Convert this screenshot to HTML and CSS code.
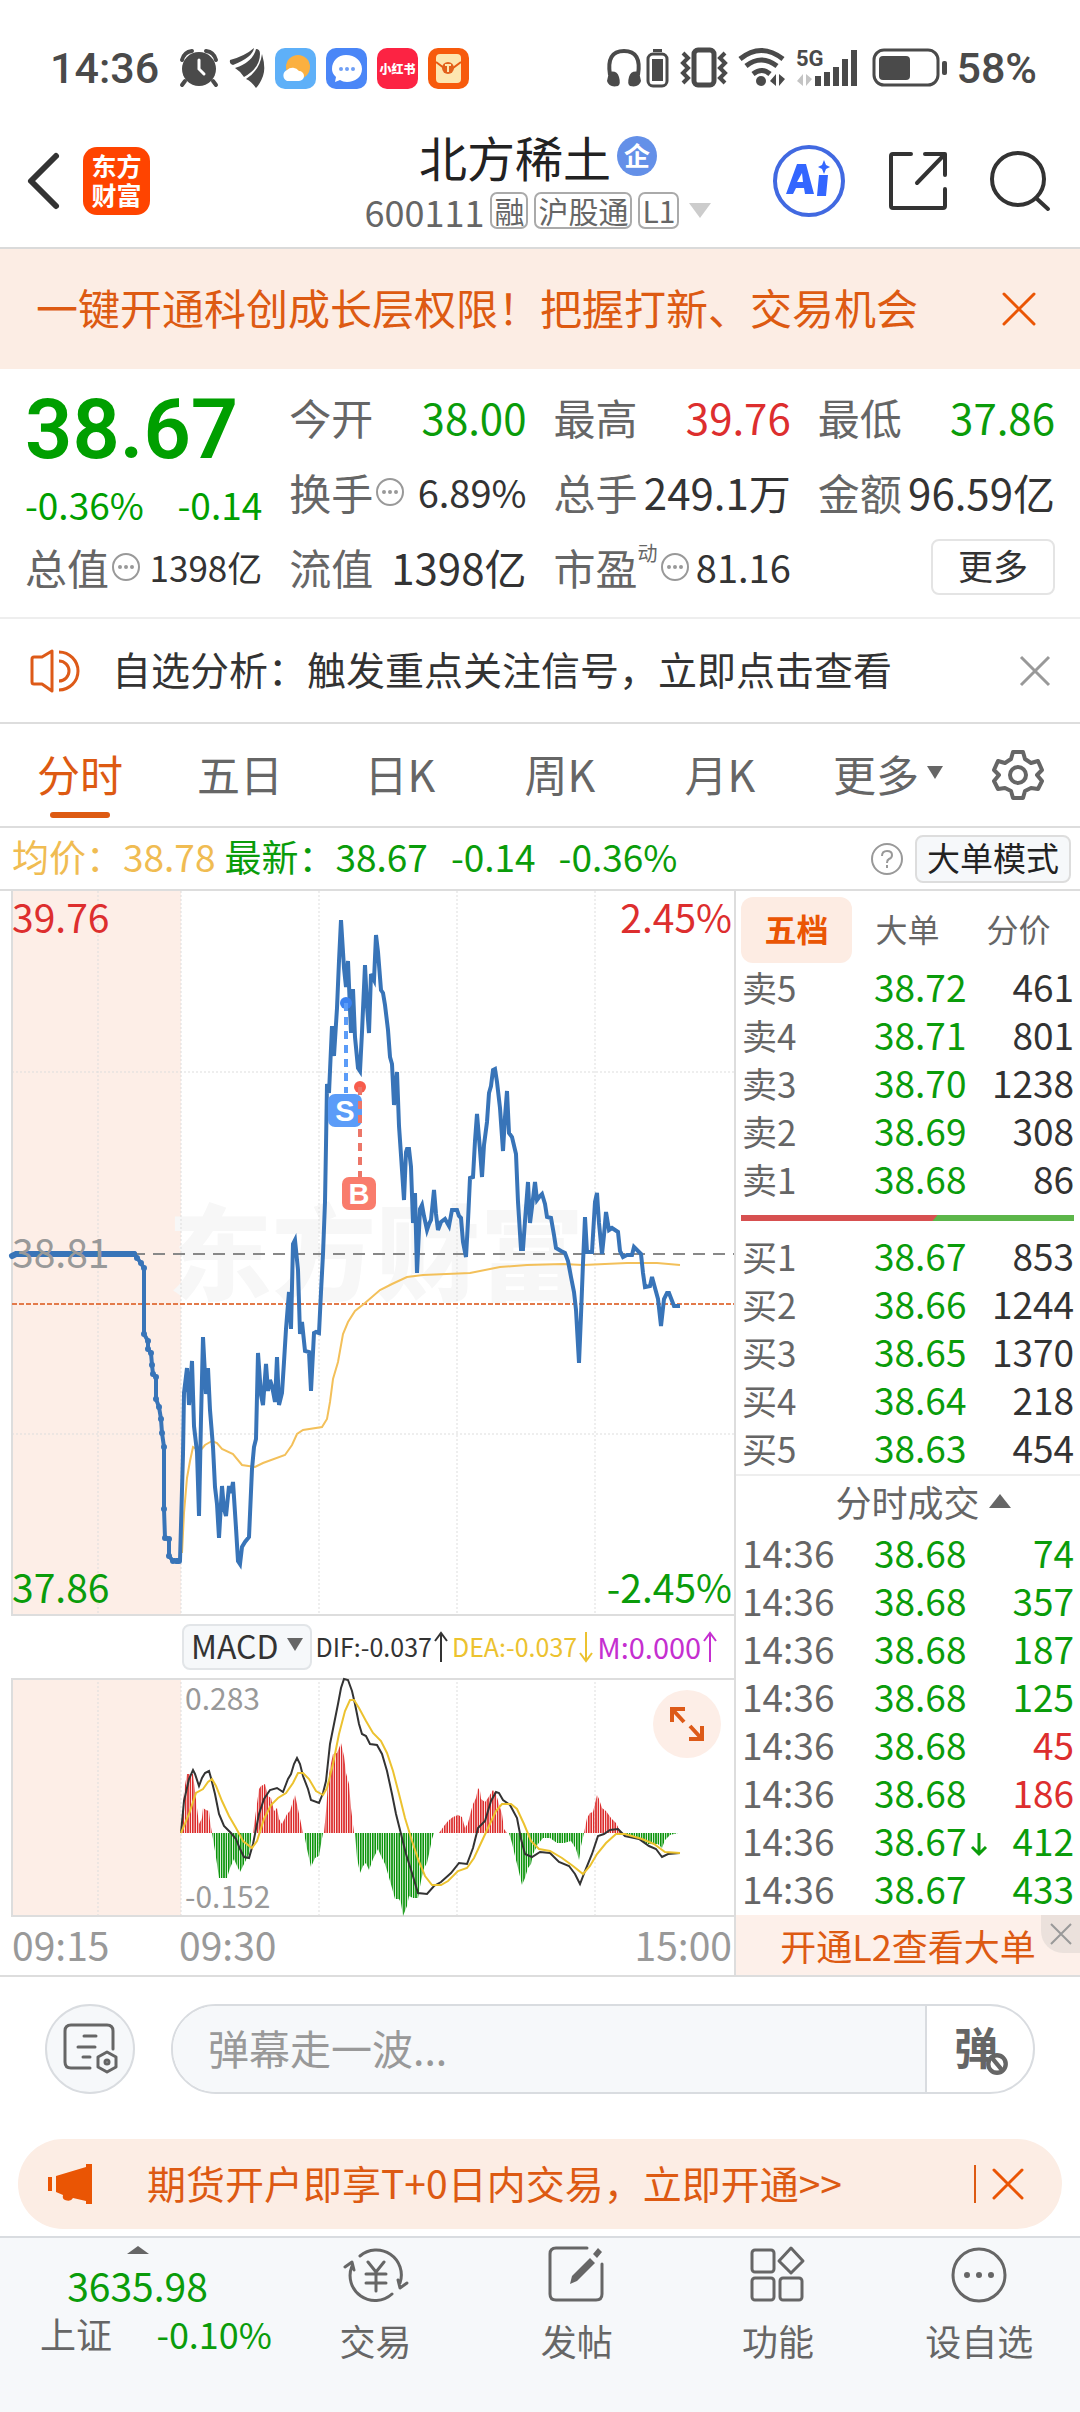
FILE: index.html
```html
<!DOCTYPE html>
<html lang="zh-CN">
<head>
    <meta charset="UTF-8">
    <meta name="viewport" content="width=device-width, initial-scale=1.0">
    <title>北方稀土 600111</title>
    <link rel="stylesheet" href="styles.css">
</head>
<body>

    <!-- Status bar -->
    <div class="status">
        <div class="status-group">
            <span class="clock">14:36</span>
            <svg width="40" height="40" viewBox="0 0 40 40" fill="#4a4a4a">
                <circle cx="20" cy="21" r="17"/>
                <path d="M6 33l-3 4M34 33l3 4M3 12q2-8 10-9M37 12q-2-8-10-9" stroke="#4a4a4a" stroke-width="4" fill="none" stroke-linecap="round"/>
                <path d="M20 12v9l5 5" stroke="#fff" stroke-width="3" fill="none" stroke-linecap="round"/>
            </svg>
            <svg width="36" height="40" viewBox="0 0 36 40" fill="#4a4a4a">
                <path d="M1 12Q16 8 25 0Q24 9 4 17Q0 16 1 12z"/>
                <path d="M6 20Q24 14 27 1Q31 1 31 6Q31 20 15 29Q11 23 6 20z"/>
                <path d="M17 31Q31 22 33 6Q37 20 34 28Q31 36 27 40Q22 33 17 31z"/>
            </svg>
            <svg class="app" viewBox="0 0 41 41">
                <rect width="41" height="41" rx="10" fill="#5eb0f8"/>
                <circle cx="23" cy="19" r="12" fill="#fbb040"/>
                <path d="M12 33a6 6 0 0 1 0-11a8 8 0 0 1 12 1a5 5 0 0 1 0 10z" fill="#fff"/>
            </svg>
            <svg class="app" viewBox="0 0 41 41">
                <rect width="41" height="41" rx="10" fill="#4a86f7"/>
                <path d="M20 7c9 0 16 6 16 14s-7 13-15 13c-3 0-5-1-7-2l-5 2 1-5c-3-3-4-5-4-8 0-8 6-14 14-14z" fill="#fff"/>
                <g fill="#6f9ff5"><circle cx="15" cy="21" r="2"/><circle cx="21" cy="21" r="2"/><circle cx="27" cy="21" r="2"/></g>
            </svg>
            <span class="app app-red">小红书</span>
            <svg class="app" viewBox="0 0 41 41">
                <rect width="41" height="41" rx="10" fill="#f75a0c"/>
                <rect x="8" y="6" width="25" height="29" rx="4" fill="#fde6b0"/>
                <path d="M8 14l8 6h9l8-6" stroke="#e65a12" stroke-width="2" fill="none"/>
                <circle cx="20" cy="20" r="6" fill="#e2601c"/>
                <path d="M17 17h6M20 17v7" stroke="#fde6b0" stroke-width="2"/>
            </svg>
        </div>
        <div class="status-group status-right">
            <svg width="67" height="40" viewBox="0 0 67 40">
                <path d="M4 27Q0 3 18 3T32 27" fill="none" stroke="#4a4a4a" stroke-width="4"/>
                <path d="M3 24q8-2 10 5t-1 9q-9 2-11-5zM33 24q-8-2-10 5t1 9q9 2 11-5z" fill="#4a4a4a"/>
                <rect x="42" y="6" width="19" height="32" rx="5" fill="none" stroke="#4a4a4a" stroke-width="3"/>
                <path d="M46 11h11v22H46zM47 1h9v3h-9z" fill="#4a4a4a"/>
            </svg>
            <svg width="49" height="40" viewBox="0 0 49 40" fill="none" stroke="#4a4a4a">
                <rect x="13" y="2" width="20" height="35" rx="4" stroke-width="5"/>
                <path d="M2 5l5 5-5 5 5 5-5 5 5 5-5 5M44 5l-5 5 5 5-5 5 5 5-5 5 5 5" stroke-width="4"/>
            </svg>
            <svg width="50" height="40" viewBox="0 0 50 40">
                <g fill="none" stroke="#4a4a4a" stroke-width="5">
                    <path d="M2 11q21-17 43 0M8 18q15-12 31 0M15 26q9-7 17 0"/>
                </g>
                <circle cx="23" cy="33" r="5" fill="#4a4a4a"/>
                <path d="M32 33l6-7v12M41 26v12l6-7" fill="#4a4a4a"/>
            </svg>
            <svg width="68" height="40" viewBox="0 0 68 40">
                <text class="net-label" x="0" y="18">5G</text>
                <path d="M1 33l6-7v12M10 26v12l6-7" fill="#c4c4c4"/>
                <path d="M22 28v10M31 24v14M40 19v19M49 11v27M58 2v36" stroke="#4a4a4a" stroke-width="6"/>
            </svg>
            <svg width="76" height="40" viewBox="0 0 76 40">
                <rect x="2" y="2" width="64" height="35" rx="10" fill="none" stroke="#4a4a4a" stroke-width="3"/>
                <rect x="7" y="8" width="31" height="24" rx="4" fill="#4a4a4a"/>
                <rect x="70" y="13" width="5" height="14" rx="2" fill="#4a4a4a"/>
            </svg>
            <span class="battery">58%</span>
        </div>
    </div>

    <!-- Title bar -->
    <header class="header">
        <div class="header-left">
            <button class="icon-btn" aria-label="返回">
                <svg width="34" height="58" viewBox="0 0 34 58" fill="none" stroke="#333" stroke-width="6" stroke-linecap="round" stroke-linejoin="round"><path d="M30 4L5 29l25 25"/></svg>
            </button>
            <a class="logo" href="#">东方<br>财富</a>
        </div>
        <div class="header-title">
            <h1 class="stock-name">北方稀土<span class="badge">企</span></h1>
            <div class="stock-code">
                <span>600111</span>
                <span class="tag">融</span>
                <span class="tag">沪股通</span>
                <span class="tag">L1</span>
                <svg width="22" height="16" viewBox="0 0 22 16"><path d="M0 0h22L11 15z" fill="#ccc"/></svg>
            </div>
        </div>
        <div class="header-right">
            <button class="icon-btn" aria-label="AI">
                <svg width="74" height="74" viewBox="0 0 74 74">
                    <circle cx="37" cy="37" r="34" fill="none" stroke="#4169e1" stroke-width="4"/>
                    <path d="M14 50L25 20h9l8 30h-9l-1-6h-8l-3 6zM25 38h6l-1-9z" fill="#3366ff" fill-rule="evenodd"/>
                    <path d="M47 31h9l-2 21h-9zM52 16l2 5 4 2-4 2-2 5-2-5-4-2 4-2z" fill="#3366ff"/>
                </svg>
            </button>
            <button class="icon-btn" aria-label="分享">
                <svg width="60" height="60" viewBox="0 0 60 60" fill="none" stroke="#333" stroke-width="4" stroke-linecap="round" stroke-linejoin="round"><path d="M23 3H5q-2 0-2 2v50q0 2 2 2h50q2 0 2-2V38M37 3h20v21M56 4L29 32"/></svg>
            </button>
            <button class="icon-btn" aria-label="搜索">
                <svg width="60" height="62" viewBox="0 0 60 62" fill="none" stroke="#333" stroke-width="4" stroke-linecap="round"><circle cx="28" cy="29" r="26"/><path d="M46 48l12 11"/></svg>
            </button>
        </div>
    </header>

    <!-- Promo strip -->
    <div class="promo">
        <a href="#">一键开通科创成长层权限！把握打新、交易机会</a>
        <button class="icon-btn" aria-label="关闭">
            <svg width="34" height="34" viewBox="0 0 34 34" stroke="#ea5504" stroke-width="3" stroke-linecap="round"><path d="M2 2l30 30M32 2L2 32"/></svg>
        </button>
    </div>

    <!-- Quote summary -->
    <section class="quote">
        <div class="quote-main">
            <div class="price">38.67</div>
            <div class="change"><span>-0.36%</span><span>-0.14</span></div>
        </div>
        <div class="stat"><span class="stat-name">今开</span><span class="down">38.00</span></div>
        <div class="stat"><span class="stat-name">最高</span><span class="up">39.76</span></div>
        <div class="stat"><span class="stat-name">最低</span><span class="down">37.86</span></div>
        <div class="stat"><span class="stat-name">换手<svg class="dots" viewBox="0 0 30 30"><use href="#i-dots"/></svg></span><span class="mid">6.89%</span></div>
        <div class="stat"><span class="stat-name">总手</span><span>249.1万</span></div>
        <div class="stat"><span class="stat-name">金额</span><span>96.59亿</span></div>
        <div class="stat"><span class="stat-name">总值<svg class="dots" viewBox="0 0 30 30"><use href="#i-dots"/></svg></span><span class="small">1398亿</span></div>
        <div class="stat"><span class="stat-name">流值</span><span>1398亿</span></div>
        <div class="stat"><span class="stat-name">市盈<sup>动</sup><svg class="dots" viewBox="0 0 30 30"><use href="#i-dots"/></svg></span><span class="mid">81.16</span></div>
        <div class="stat"><button class="more-btn">更多</button></div>
    </section>

    <!-- Notice -->
    <div class="notice">
        <svg width="52" height="44" viewBox="0 0 52 44" fill="none" stroke="#dd5a18" stroke-width="3" stroke-linejoin="round"><path d="M3 10q0-2 2-2h8L23 2v40l-10-7H5q-2 0-2-2zM30 3a19 19 0 0 1 0 38M30 12a10 10 0 0 1 0 20"/></svg>
        <a href="#">自选分析：触发重点关注信号，立即点击查看</a>
        <button class="icon-btn" aria-label="关闭">
            <svg width="30" height="30" viewBox="0 0 30 30" stroke="#999" stroke-width="3"><path d="M1 1l28 28M29 1L1 29"/></svg>
        </button>
    </div>

    <!-- Period tabs -->
    <nav class="tabs">
        <button class="tab active">分时</button>
        <button class="tab">五日</button>
        <button class="tab">日K</button>
        <button class="tab">周K</button>
        <button class="tab">月K</button>
        <button class="tab tab-more">更多<svg width="16" height="14" viewBox="0 0 16 14"><path d="M0 0h16L8 13z" fill="#666"/></svg></button>
        <button class="tab tab-gear" aria-label="设置">
            <svg width="52" height="52" viewBox="0 0 52 52" fill="none" stroke="#666" stroke-width="4" stroke-linejoin="round">
                <path d="M21 3h10l2 7 6 4 7-2 4 9-5 5 5 6-4 8-7-1-6 3-2 7H21l-2-7-6-3-7 1-4-8 5-6-5-5 4-9 7 2 6-4z"/>
                <circle cx="26" cy="26" r="8"/>
            </svg>
        </button>
    </nav>

    <div class="info">
        <span class="avg">均价：38.78</span>
        <span class="down info-last"><span>最新：38.67</span><span>-0.14</span><span>-0.36%</span></span>
        <span class="info-right">
            <svg width="34" height="34" viewBox="0 0 34 34"><circle cx="17" cy="17" r="15" fill="none" stroke="#999" stroke-width="2"/><path d="M12 14q0-5 5-5t5 4q0 3-3 4-2 1-2 4M17 23v3" fill="none" stroke="#999" stroke-width="2"/></svg>
            <button class="mode-btn">大单模式</button>
        </span>
    </div>

    <main class="board">
        <div class="charts">
            <!-- Intraday price -->
            <svg class="chart" viewBox="0 0 734 724">
                <rect x="12" y="0" width="169" height="724" fill="#fdeee7"/>
                <text class="watermark" x="168" y="402">东方财富</text>
                <path class="grid" d="M98 0v724M181 0v724M319 0v724M457 0v724M595 0v724M12 181h722M12 543h722"/>
                <path class="frame" d="M12 0v724h722"/>
                <path d="M133 363h601" stroke="#888" stroke-width="2" stroke-dasharray="12 8"/>
                <path d="M12 413h722" stroke="#e37a4a" stroke-width="2" stroke-dasharray="5 2"/>
                <polyline class="line-avg" points="182,662 184,622 187,587 190,570 193,556 200,560 205,554 212,550 217,552 222,558 233,563 242,574 255,576 263,572 285,564 292,554 297,543 303,539 322,536 327,528 330,511 333,488 338,471 343,443 348,431 355,420 365,412 380,399 392,393 407,386 423,384 470,382 490,378 500,376 527,374 563,373 583,374 627,372 657,372 680,374"/>
                <path d="M12 365L16 363H134" stroke="#3874b8" stroke-width="6" fill="none" stroke-linecap="round"/>
                <polyline class="line-auction" points="134,363 138,368 144,377 144,443 148,450 148,458 151,462 152,474 153,483 156,486 156,508 159,516 161,528 162,542 164,556 164,618 165,647 169,648 169,665 173,670 180,670"/>
                <path class="auction-dots" d="M134 363h0M137 367h0M141 372h0M144 377h0M144 443h0M148 450h0M148 458h0M151 462h0M152 474h0M153 483h0M156 486h0M156 508h0M159 516h0M161 528h0M162 542h0M164 556h0M164 618h0M165 647h0M169 648h0M169 665h0M173 670h0M176 670h3"/>
                <polyline class="line-price" points="180,670 183,563 184,502 187,477 189,514 192,470 194,535 197,561 199,625 201,528 203,446 206,503 208,477 210,519 213,556 215,596 217,613 219,647 222,595 224,618 226,625 229,595 231,602 233,591 236,637 238,670 240,673 242,656 245,651 249,646 252,578 254,556 256,548 258,462 261,504 263,514 266,473 268,500 270,489 272,495 275,511 277,466 279,514 282,502 284,471 286,438 289,401 291,438 293,353 295,349 298,379 300,443 302,431 305,460 309,461 311,500 314,442 316,441 319,442 321,401 323,363 325,311 326,254 327,193 329,202 332,135 334,165 337,117 339,70 341,29 344,77 346,96 348,70 351,142 353,98 355,146 358,177 360,180 362,141 365,74 367,115 369,142 371,83 374,89 376,44 378,61 381,99 383,102 385,114 388,139 390,166 392,173 394,214 397,181 399,235 401,264 404,309 406,261 407,258 409,258 411,276 413,332 415,302 417,382 420,318 422,314 424,325 427,339 429,333 431,329 434,299 436,323 438,339 441,331 445,328 449,335 452,319 457,319 459,325 461,327 463,351 466,366 468,330 470,287 473,286 475,250 477,223 480,259 482,286 484,254 487,231 489,202 491,195 493,179 495,178 497,191 500,217 503,260 505,226 507,200 509,242 512,246 516,263 518,311 521,358 523,358 525,330 528,291 530,332 532,316 535,291 537,309 540,305 542,303 545,313 547,326 551,327 554,344 556,357 561,360 565,362 568,370 571,386 574,401 576,419 579,472 581,424 583,372 585,326 587,361 592,361 595,311 597,302 599,332 602,363 604,344 606,321 609,339 612,337 618,341 620,360 623,366 627,364 632,364 634,356 641,363 643,382 645,396 650,395 652,386 655,397 658,408 661,435 664,408 667,402 669,402 674,415 680,415"/>
                <!-- Sell / buy marks -->
                <circle cx="346" cy="112" r="6" fill="#3b82f0"/>
                <path d="M346 112v90" stroke="#5b9cf8" stroke-width="4" stroke-dasharray="8 6"/>
                <rect x="328" y="203" width="34" height="33" rx="7" fill="#5b9cf8"/>
                <text class="mark" x="345" y="230">S</text>
                <circle cx="360" cy="196" r="6" fill="#f75c4c"/>
                <path d="M360 196v90" stroke="#ec7668" stroke-width="4" stroke-dasharray="8 6"/>
                <rect x="342" y="286" width="34" height="33" rx="7" fill="#f97c6c"/>
                <text class="mark" x="359" y="313">B</text>
                <text class="axis up" x="12" y="42">39.76</text>
                <text class="axis axis-mid" x="12" y="377">38.81</text>
                <text class="axis down" x="12" y="712">37.86</text>
                <text class="axis end up" x="732" y="42">2.45%</text>
                <text class="axis end down" x="732" y="712">-2.45%</text>
            </svg>

            <div class="macd-bar">
                <button class="macd-btn">MACD<svg width="16" height="14" viewBox="0 0 16 14"><path d="M0 0h16L8 13z" fill="#666"/></svg></button>
                <span class="macd-val">DIF:-0.037<svg class="arrow" viewBox="0 0 14 32"><path d="M7 31V2M1 10l6-8 6 8"/></svg></span>
                <span class="macd-val dea">DEA:-0.037<svg class="arrow" viewBox="0 0 14 32"><path d="M7 1v29M1 22l6 8 6-8"/></svg></span>
                <span class="macd-val hist">M:0.000<svg class="arrow" viewBox="0 0 14 32"><path d="M7 31V2M1 10l6-8 6 8"/></svg></span>
            </div>

            <!-- MACD -->
            <div class="macd-wrap">
                <svg class="chart" viewBox="0 0 734 239">
                    <defs>
                        <pattern id="bars-up" width="2.4" height="10" patternUnits="userSpaceOnUse"><rect width="1.6" height="10" fill="#dc2c2c"/></pattern>
                        <pattern id="bars-down" width="2.4" height="10" patternUnits="userSpaceOnUse"><rect width="1.6" height="10" fill="#0c950c"/></pattern>
                    </defs>
                    <rect x="12" y="0" width="169" height="238" fill="#fdeee7"/>
                    <path class="grid" d="M98 0v238M181 0v238M319 0v238M457 0v238M595 0v238"/>
                    <path class="frame" d="M734 1H12v237h722"/>
                    <g fill="url(#bars-up)">
                        <path d="M182 155L184 113 187 96 193 96 195 113 197 130 199 146 202 140 203 130 206 132 209 133 210 143 212 155z"/>
                        <path d="M253 155L256 133 259 111 261 108 265 106 268 118 271 120 274 133 277 130 279 141 282 146 287 136 290 133 293 123 295 117 298 131 303 155z"/>
                        <path d="M324 155L326 133 328 106 330 90 333 76 337 75 339 70 341 65 344 78 346 95 349 106 351 130 354 155z"/>
                        <path d="M439 155L444 148 448 143 453 139 458 137 462 139 465 150 468 145 471 133 473 126 476 120 478 110 480 113 481 121 485 124 488 120 493 112 496 116 499 126 502 136 504 151 507 155z"/>
                        <path d="M584 155L587 140 590 135 593 134 597 117 599 121 602 130 606 133 611 140 616 145 619 151 622 155z"/>
                    </g>
                    <g fill="url(#bars-down)">
                        <path d="M212 155L215 173 217 186 219 200 227 200 230 190 234 181 237 188 240 194 244 186 249 176 252 155z"/>
                        <path d="M304 155L307 171 309 180 311 189 315 180 319 178 321 166 323 155z"/>
                        <path d="M355 155L357 180 360 195 363 188 366 185 369 192 373 181 378 171 381 178 385 186 388 196 392 210 395 221 399 221 401 225 403 238 407 228 409 218 413 220 418 220 421 203 424 190 427 185 429 176 432 161 434 155z"/>
                        <path d="M509 155L512 165 515 178 518 190 522 207 525 200 528 190 531 186 533 176 538 166 543 160 550 160 557 165 564 165 571 163 576 171 579 182 581 168 584 155z"/>
                        <path d="M623 155L628 158 637 160 647 166 651 166 658 166 662 170 665 162 670 157 678 155z"/>
                    </g>
                    <polyline class="line-dif" points="181,155 184,123 189,101 193,92 195,96 199,108 202,100 205,95 209,93 211,100 215,116 219,136 224,148 231,155 236,161 240,171 244,179 249,180 253,166 259,136 264,121 270,112 277,110 283,114 288,101 291,96 294,86 297,80 300,86 303,98 308,111 311,122 319,125 323,115 326,103 330,66 334,46 338,26 341,10 344,1 348,2 352,13 355,26 359,46 362,56 366,58 370,66 377,67 382,76 387,93 392,116 396,136 401,156 406,176 412,195 418,215 427,216 434,208 441,204 451,195 459,185 467,186 473,170 478,150 485,143 491,123 496,114 499,115 503,122 510,127 517,140 521,161 525,176 532,179 540,174 550,175 559,184 569,188 575,196 580,206 585,193 592,176 598,158 604,156 610,152 618,151 625,158 639,161 649,168 656,171 662,179 668,176 680,175"/>
                    <polyline class="line-dea" points="181,155 189,136 196,115 203,111 208,104 212,101 216,108 222,123 229,138 236,150 243,163 252,170 257,163 264,141 271,127 278,120 286,115 293,105 298,95 303,95 309,101 316,113 323,117 327,110 333,86 339,56 345,33 350,22 354,22 359,30 366,43 373,55 381,63 387,75 393,93 399,116 405,140 412,163 418,181 425,198 432,207 441,207 448,203 458,193 467,190 474,180 481,165 488,150 496,133 502,126 511,126 517,131 524,146 531,163 539,171 550,173 562,180 573,188 583,196 590,188 597,176 606,165 616,156 625,156 642,161 654,166 665,174 680,175"/>
                    <text class="axis-small" x="185" y="32">0.283</text>
                    <text class="axis-small" x="185" y="230">-0.152</text>
                </svg>
                <button class="expand" aria-label="放大">
                    <svg width="34" height="34" viewBox="0 0 34 34" fill="none" stroke="#dd5a18" stroke-width="4"><path d="M2 15V2h13M3 3l11 12M32 19v13H19M31 31L20 19"/></svg>
                </button>
            </div>
            <div class="times"><span>09:15</span><span>09:30</span><span>15:00</span></div>
        </div>

        <!-- Order book -->
        <aside class="book">
            <div class="book-tabs">
                <button class="book-tab active">五档</button>
                <button class="book-tab">大单</button>
                <button class="book-tab">分价</button>
            </div>
            <table class="rows">
                <tr><th>卖5</th><td>38.72</td><td>461</td></tr>
                <tr><th>卖4</th><td>38.71</td><td>801</td></tr>
                <tr><th>卖3</th><td>38.70</td><td>1238</td></tr>
                <tr><th>卖2</th><td>38.69</td><td>308</td></tr>
                <tr><th>卖1</th><td>38.68</td><td>86</td></tr>
            </table>
            <div class="ratio"><i></i></div>
            <table class="rows">
                <tr><th>买1</th><td>38.67</td><td>853</td></tr>
                <tr><th>买2</th><td>38.66</td><td>1244</td></tr>
                <tr><th>买3</th><td>38.65</td><td>1370</td></tr>
                <tr><th>买4</th><td>38.64</td><td>218</td></tr>
                <tr><th>买5</th><td>38.63</td><td>454</td></tr>
            </table>
            <button class="deals-title">分时成交<svg width="22" height="14" viewBox="0 0 22 14"><path d="M0 14h22L11 0z" fill="#666"/></svg></button>
            <table class="rows deals">
                <tr><th>14:36</th><td>38.68</td><td class="down">74</td></tr>
                <tr><th>14:36</th><td>38.68</td><td class="down">357</td></tr>
                <tr><th>14:36</th><td>38.68</td><td class="down">187</td></tr>
                <tr><th>14:36</th><td>38.68</td><td class="down">125</td></tr>
                <tr><th>14:36</th><td>38.68</td><td class="up">45</td></tr>
                <tr><th>14:36</th><td>38.68</td><td class="up">186</td></tr>
                <tr><th>14:36</th><td>38.67<svg class="tick" viewBox="0 0 18 24"><path d="M9 1v21M2 15l7 7 7-7"/></svg></td><td class="down">412</td></tr>
                <tr><th>14:36</th><td>38.67</td><td class="down">433</td></tr>
            </table>
            <div class="level2">
                <a href="#">开通L2查看大单</a>
                <button class="level2-close" aria-label="关闭">
                    <svg width="22" height="22" viewBox="0 0 22 22" stroke="#999" stroke-width="2"><path d="M1 1l20 20M21 1L1 21"/></svg>
                </button>
            </div>
        </aside>
    </main>

    <!-- Comment box -->
    <div class="comment">
        <button class="comment-set" aria-label="弹幕设置">
            <svg width="56" height="52" viewBox="0 0 56 52" fill="none" stroke="#666" stroke-width="3" stroke-linecap="round" stroke-linejoin="round">
                <path d="M28 45H9q-6 0-6-6V8q0-6 6-6h36q6 0 6 6v18M22 13h12M16 24h17M21 34h7"/>
                <path d="M45 29l9 5v10l-9 5-9-5V34z"/><circle cx="45" cy="39" r="2"/>
            </svg>
        </button>
        <div class="comment-box">
            <input class="comment-input" type="text" placeholder="弹幕走一波..." aria-label="弹幕">
            <button class="comment-off" aria-label="关闭弹幕">弹<svg class="ban" viewBox="0 0 22 22"><circle cx="11" cy="11" r="8"/><path d="M6 5l10 12"/></svg></button>
        </div>
    </div>

    <div class="futures">
        <svg width="48" height="40" viewBox="0 0 48 40" fill="#ea5504"><path d="M0 13h4v14H0zM8 12L38 3V0h6v40h-6v-3l-13-3q-2 4-8 2-3-1-2-5l-7-3z"/></svg>
        <a href="#">期货开户即享T+0日内交易，立即开通&gt;&gt;</a>
        <button class="icon-btn futures-close" aria-label="关闭">
            <svg width="32" height="32" viewBox="0 0 32 32" stroke="#ea5504" stroke-width="3" stroke-linecap="round"><path d="M2 2l28 28M30 2L2 30"/></svg>
        </button>
    </div>

    <!-- Bottom bar -->
    <footer class="bottom">
        <a class="index" href="#">
            <svg width="22" height="8" viewBox="0 0 22 8"><path d="M0 8h22L11 0z" fill="#666"/></svg>
            <span class="index-value">3635.98</span>
            <span class="index-row"><span>上证</span><span class="down">-0.10%</span></span>
        </a>
        <a class="nav-item" href="#">
            <svg viewBox="0 0 66 58"><path d="M17 10A25 25 0 0 1 57 37M49 48A25 25 0 0 1 9 20M2 21l7-5 2 8M64 37l-7 5-2-8M25 16l8 10 8-10M33 26v19M23 28h20M23 37h20"/></svg>
            交易
        </a>
        <a class="nav-item" href="#">
            <svg viewBox="0 0 66 58"><path d="M43 2H12q-6 0-6 6v40q0 6 6 6h40q6 0 6-6V18"/><path d="M26 38l2-8 18-18 5 5-18 18zM49 8l5-6 4 4-5 6z" fill="#666" stroke="none"/></svg>
            发帖
        </a>
        <a class="nav-item" href="#">
            <svg viewBox="0 0 66 58"><rect x="7" y="4" width="22" height="22" rx="3"/><rect x="7" y="32" width="22" height="22" rx="3"/><rect x="35" y="32" width="22" height="22" rx="3"/><path d="M46 2l12 13-12 12-12-12z"/></svg>
            功能
        </a>
        <a class="nav-item" href="#">
            <svg viewBox="0 0 66 58"><circle cx="33" cy="29" r="26"/><path d="M21 29h0M33 29h0M45 29h0" stroke-width="6"/></svg>
            设自选
        </a>
    </footer>

    <!-- Shared symbols -->
    <svg class="defs" width="0" height="0">
        <symbol id="i-dots" viewBox="0 0 30 30">
            <circle cx="15" cy="15" r="13" fill="none" stroke="#999" stroke-width="2"/>
            <path d="M9 15h0M15 15h0M21 15h0" stroke="#999" stroke-width="4" stroke-linecap="round"/>
        </symbol>
    </svg>

</body>
</html>
```

FILE: styles.css
```css
* {
    box-sizing: border-box;
}

body {
    margin: 0;
    min-height: 100vh;
    display: flex;
    flex-direction: column;
    background-color: #fff;
    color: #333;
    font-family: "Noto Sans CJK SC", sans-serif;
    font-size: 42px;
    line-height: 1;
}

a {
    color: inherit;
    text-decoration: none;
}

button {
    margin: 0;
    padding: 0;
    border: none;
    background: none;
    color: inherit;
    font: inherit;
    cursor: pointer;
}

svg {
    display: block;
    flex: none;
    overflow: visible;
}

.defs {
    position: absolute;
}

.icon-btn {
    display: flex;
}

.up { color: #dd2e2e; fill: #dd2e2e; }
.down { color: #0a9c0a; fill: #0a9c0a; }

/* Status bar */
.status {
    display: flex;
    justify-content: space-between;
    align-items: center;
    height: 114px;
    padding: 22px 43px 0 50px;
    color: #4a4a4a;
}
.status-group {
    display: flex;
    align-items: center;
    gap: 10px;
}
.status-group .app {
    width: 41px;
    height: 41px;
}
.clock,
.battery {
    font-family: Roboto, sans-serif;
    font-size: 43px;
    font-weight: 500;
}
.clock {
    margin-right: 10px;
}
.status-right {
    gap: 8px;
}
.app-red {
    border-radius: 10px;
    background-color: #fc2343;
    color: #fff;
    font-size: 12px;
    font-weight: 900;
    line-height: 41px;
    text-align: center;
}
.net-label {
    fill: #4a4a4a;
    font-family: Roboto, sans-serif;
    font-size: 22px;
    font-weight: 700;
}

/* Title bar */
.header {
    display: grid;
    grid-template-columns: 1fr auto 1fr;
    align-items: center;
    height: 135px;
    padding: 0 30px 0 26px;
    border-bottom: 2px solid #dadada;
}
.header-left {
    display: flex;
    align-items: center;
    gap: 23px;
}
.logo {
    width: 67px;
    height: 68px;
    padding-top: 4px;
    border-radius: 14px;
    background-color: #ff4400;
    color: #fff;
    font-size: 25px;
    font-weight: 700;
    line-height: 29px;
    text-align: center;
}
.header-title {
    display: flex;
    flex-direction: column;
    align-items: center;
    gap: 12px;
}
.stock-name {
    display: flex;
    align-items: center;
    gap: 6px;
    margin: 0;
    color: #222;
    font-size: 48px;
    font-weight: 400;
}
.badge {
    width: 40px;
    height: 40px;
    border-radius: 50%;
    background-color: #6490e8;
    color: #fff;
    font-size: 26px;
    font-weight: 700;
    line-height: 38px;
    text-align: center;
}
.stock-code {
    display: flex;
    align-items: center;
    gap: 6px;
    color: #666;
    font-size: 36px;
}
.stock-code svg {
    margin-left: 4px;
}
.tag {
    padding: 0 2px;
    border: 2px solid #aaa;
    border-radius: 7px;
    font-size: 30px;
    line-height: 33px;
}
.header-right {
    display: flex;
    align-items: center;
    justify-content: flex-end;
    gap: 42px;
}

/* Promo strip */
.promo {
    display: flex;
    justify-content: space-between;
    align-items: center;
    height: 120px;
    padding: 0 44px 0 36px;
    background-color: #fcede4;
    color: #dd5a12;
}
.promo a,
.notice a,
.futures a {
    padding-bottom: 4px;
}

/* Quote summary */
.quote {
    display: grid;
    grid-template-columns: repeat(4, 1fr);
    grid-auto-rows: 75px;
    column-gap: 27px;
    padding: 10px 25px 13px;
    border-bottom: 2px solid #eee;
}
.quote-main {
    grid-row: span 2;
    color: #009f00;
}
.price {
    font-family: Roboto, sans-serif;
    font-size: 83px;
    font-weight: 600;
    line-height: 101px;
}
.change {
    display: flex;
    justify-content: space-between;
    font-size: 37px;
    line-height: 48px;
}
.stat {
    display: flex;
    justify-content: space-between;
    align-items: center;
    white-space: nowrap;
}
.stat-name {
    display: flex;
    align-items: center;
    color: #666;
}
.stat-name sup {
    align-self: flex-start;
    font-size: 20px;
    line-height: 14px;
}
.dots {
    width: 30px;
    height: 30px;
    margin-left: 2px;
}
.mid { font-size: 38px; }
.small { font-size: 35px; }
.more-btn {
    width: 124px;
    height: 56px;
    margin-left: auto;
    padding-bottom: 4px;
    border: 2px solid #e4e4e4;
    border-radius: 8px;
    font-size: 35px;
}

/* Notice */
.notice {
    display: flex;
    align-items: center;
    height: 105px;
    padding: 0 30px 0 29px;
    border-bottom: 2px solid #ddd;
    font-size: 39px;
}
.notice a {
    flex: 1;
    margin-left: 31px;
}

/* Period tabs */
.tabs {
    display: flex;
    height: 104px;
    padding-right: 20px;
    border-bottom: 2px solid #ddd;
    color: #666;
    font-size: 43px;
}
.tab {
    position: relative;
    flex: 1;
    padding-bottom: 4px;
}
.tab.active {
    color: #dd5a12;
}
.tab.active::after {
    content: "";
    position: absolute;
    bottom: 8px;
    left: 50%;
    width: 60px;
    height: 6px;
    border-radius: 3px;
    background-color: #dd5a12;
    transform: translateX(-50%);
}
.tab-more,
.tab-gear {
    display: flex;
    flex: 0 0 176px;
    justify-content: center;
    align-items: center;
    gap: 8px;
}
.tab-gear {
    flex-basis: 84px;
    padding-bottom: 0;
}

.info {
    display: flex;
    align-items: center;
    gap: 9px;
    height: 63px;
    padding: 0 9px 0 12px;
    border-bottom: 2px solid #ddd;
    font-size: 37px;
}
.avg,
.info-last {
    padding-bottom: 4px;
}
.avg {
    color: #f0bc52;
}
.info-last {
    display: flex;
    gap: 23px;
}
.info-right {
    display: flex;
    align-items: center;
    gap: 11px;
    margin-left: auto;
}
.mode-btn {
    height: 48px;
    padding: 0 10px 3px;
    border: 2px solid #ddd;
    border-radius: 8px;
    background-color: #f6f8fa;
    color: #222;
    font-size: 33px;
}

/* Charts + order book */
.board {
    display: grid;
    grid-template-columns: minmax(0, 1fr) 346px;
    border-bottom: 2px solid #ddd;
}
.chart {
    width: 100%;
    height: auto;
}
.grid {
    fill: none;
    stroke: #ddd;
    stroke-width: 1;
    stroke-dasharray: 2 2;
}
.frame {
    fill: none;
    stroke: #ddd;
    stroke-width: 2;
}
.watermark {
    fill: #f7f7f7;
    font-size: 104px;
    font-weight: 900;
}
.line-avg,
.line-price,
.line-auction,
.line-dif,
.line-dea {
    fill: none;
    stroke-width: 2;
}
.line-avg { stroke: #f3c05a; }
.line-price { stroke: #3874b8; stroke-width: 4; }
.line-auction { stroke: #3874b8; stroke-width: 4; }
.line-dif { stroke: #333; }
.line-dea { stroke: #ecc22f; }
.auction-dots {
    stroke: #3874b8;
    stroke-width: 6;
    stroke-linecap: round;
}
.mark {
    fill: #fff;
    font-family: "Liberation Sans", sans-serif;
    font-size: 29px;
    font-weight: 700;
    text-anchor: middle;
}
.axis {
    font-size: 39px;
}
.axis.end {
    text-anchor: end;
}
.axis-mid {
    fill: #999;
}
.axis-small {
    fill: #999;
    font-size: 30px;
}

.macd-bar {
    display: flex;
    align-items: center;
    gap: 4px;
    height: 63px;
    padding-left: 182px;
    white-space: nowrap;
}
.macd-btn {
    display: flex;
    align-items: center;
    gap: 8px;
    height: 46px;
    padding: 0 7px 3px;
    border: 2px solid #e2e5e8;
    border-radius: 8px;
    background-color: #f6f8fa;
    font-size: 32px;
}
.macd-val {
    display: flex;
    align-items: center;
    gap: 2px;
    font-size: 25px;
}
.macd-val.dea { color: #ecc22f; }
.macd-val.hist { color: #c52fd0; font-size: 29px; }
.arrow {
    width: 14px;
    height: 32px;
    fill: none;
    stroke: currentColor;
    stroke-width: 2;
}
.macd-wrap {
    position: relative;
}
.expand {
    position: absolute;
    top: 12px;
    right: 13px;
    display: flex;
    justify-content: center;
    align-items: center;
    width: 68px;
    height: 68px;
    border-radius: 50%;
    background-color: #fdeee7;
}
.times {
    display: grid;
    grid-template-columns: 167px 1fr auto;
    padding: 0 2px 4px 12px;
    color: #999;
    font-size: 39px;
    line-height: 54px;
}

.book {
    display: flex;
    flex-direction: column;
    border-left: 2px solid #ddd;
}
.book-tabs {
    display: grid;
    grid-template-columns: repeat(3, 1fr);
    padding: 6px 6px 2px 5px;
    color: #666;
    font-size: 32px;
}
.book-tab {
    height: 66px;
    padding-bottom: 4px;
    border-radius: 12px;
}
.book-tab.active {
    background-color: #fdece3;
    color: #ea5504;
    font-weight: 700;
}
.rows {
    width: 100%;
    border-collapse: collapse;
    table-layout: fixed;
    font-size: 37px;
}
.rows tr {
    height: 48px;
}
.rows th,
.rows td {
    padding: 0 0 5px;
    text-align: left;
    font-weight: 400;
}
.rows th {
    width: 138px;
    padding-left: 6px;
    color: #666;
    font-size: 35px;
}
.rows td:nth-child(2) {
    width: 118px;
    color: #0a9c0a;
}
.rows td:last-child {
    padding-right: 6px;
    text-align: right;
}
.deals th {
    font-size: 37px;
}
.tick {
    display: inline-block;
    width: 18px;
    height: 24px;
    margin-left: 4px;
    fill: none;
    stroke: currentColor;
    stroke-width: 3;
}
.ratio {
    height: 6px;
    margin: 10px 6px 13px 5px;
    background-color: #5cb64a;
}
.ratio i {
    display: block;
    width: 59%;
    height: 100%;
    background-color: #d75050;
    clip-path: polygon(0 0, 100% 0, calc(100% - 5px) 100%, 0 100%);
}
.deals-title {
    display: flex;
    justify-content: center;
    align-items: center;
    gap: 9px;
    height: 57px;
    padding: 0 0 5px 30px;
    border-top: 2px solid #eee;
    color: #666;
    font-size: 36px;
}
.level2 {
    position: relative;
    display: flex;
    flex: 1;
    justify-content: center;
    align-items: center;
    background-color: #fdf0ea;
    color: #dd5a12;
    font-size: 36px;
}
.level2-close {
    position: absolute;
    top: 0;
    right: 0;
    display: flex;
    justify-content: center;
    align-items: center;
    width: 39px;
    height: 38px;
    border-bottom-left-radius: 22px;
    background-color: #ebe1dc;
}

/* Comment box */
.comment {
    display: flex;
    gap: 36px;
    padding: 27px 45px 45px;
}
.comment-set {
    display: flex;
    justify-content: center;
    align-items: center;
    width: 90px;
    height: 90px;
    border: 2px solid #d9dce0;
    border-radius: 50%;
    background-color: #f6f8fa;
}
.comment-box {
    display: flex;
    flex: 1;
    height: 90px;
    border: 2px solid #d9dce0;
    border-radius: 45px;
    overflow: hidden;
}
.comment-input {
    flex: 1;
    min-width: 0;
    padding: 0 35px 4px;
    border: none;
    border-right: 2px solid #d9dce0;
    background-color: #f6f8fa;
    font: inherit;
    font-size: 41px;
}
.comment-input::placeholder {
    color: #999;
}
.comment-off {
    position: relative;
    width: 106px;
    padding: 0 8px 6px 0;
    color: #666;
    font-size: 44px;
    font-weight: 700;
}
.ban {
    position: absolute;
    right: 24px;
    bottom: 16px;
    width: 24px;
    height: 24px;
    fill: #fff;
    stroke: #666;
    stroke-width: 4;
}

.futures {
    display: flex;
    align-items: center;
    height: 90px;
    margin: 0 18px 7px;
    padding: 0 38px 0 30px;
    border-radius: 45px;
    background-color: #fcede4;
    color: #dd5a12;
    font-size: 39px;
}
.futures a {
    flex: 1;
    margin-left: 51px;
}
.futures-close {
    padding: 3px 0 3px 16px;
    border-left: 2px solid #dd5a12;
}

/* Bottom bar */
.bottom {
    display: grid;
    grid-template-columns: 275px repeat(4, 1fr);
    flex: 1;
    border-top: 2px solid #d9dce0;
    background-color: #f6f8fa;
    color: #666;
    font-size: 36px;
}
.index {
    display: flex;
    flex-direction: column;
    align-items: center;
    padding-top: 8px;
}
.index-value {
    margin-top: 9px;
    color: #0a9c0a;
    font-size: 39px;
    line-height: 44px;
}
.index-row {
    display: flex;
    justify-content: space-between;
    width: 232px;
    margin-left: 37px;
    line-height: 52px;
}
.nav-item {
    display: flex;
    flex-direction: column;
    align-items: center;
    gap: 18px;
    padding-top: 8px;
}
.nav-item svg {
    width: 66px;
    height: 58px;
    fill: none;
    stroke: #666;
    stroke-width: 3;
    stroke-linecap: round;
    stroke-linejoin: round;
}
```
